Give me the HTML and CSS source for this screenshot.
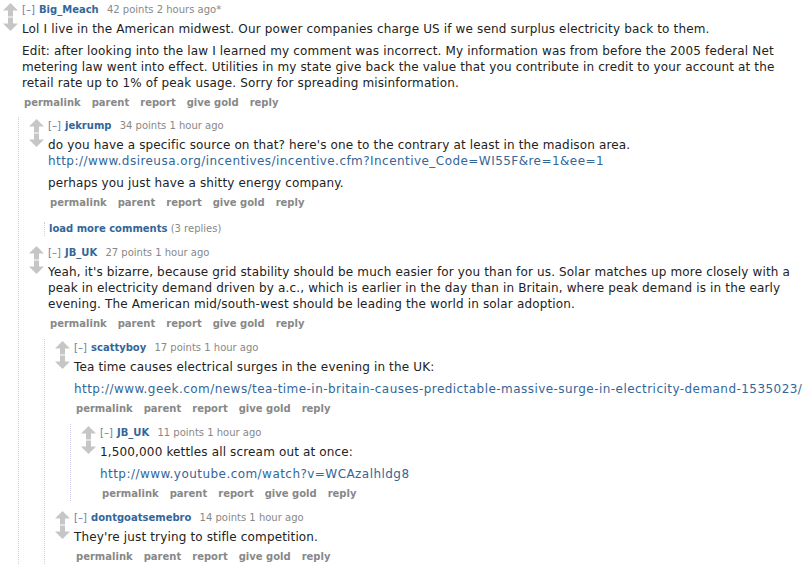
FILE: index.html
```html
<!DOCTYPE html>
<html>
<head>
<meta charset="utf-8">
<link rel="stylesheet" href="styles.css">
</head>
<body>
<div class="thread">
  <div class="comment top">
    <div class="row">
      <div class="midcol">
        <svg class="arrow" viewBox="0 0 15 14"><polygon points="7.5,0 15,7.5 10,7.5 10,13.5 5,13.5 5,7.5 0,7.5"/></svg>
        <svg class="arrow" viewBox="0 0 15 14"><polygon points="7.5,14 15,6.5 10,6.5 10,0.5 5,0.5 5,6.5 0,6.5"/></svg>
      </div>
      <div class="entry">
        <p class="tagline"><a class="expand">[–]</a> <a class="author">Big_Meach</a> <span class="score">42 points 2 hours ago*</span></p>
        <div class="md">
          <p>Lol I live in the American midwest. Our power companies charge US if we send surplus electricity back to them.</p>
          <p>Edit: after looking into the law I learned my comment was incorrect. My information was from before the 2005 federal Net<br>metering law went into effect. Utilities in my state give back the value that you contribute in credit to your account at the<br>retail rate up to 1% of peak usage. Sorry for spreading misinformation.</p>
        </div>
        <ul class="buttons"><li>permalink</li><li>parent</li><li>report</li><li>give gold</li><li>reply</li></ul>
      </div>
    </div>
    <div class="child">
      <div class="comment">
        <div class="row">
          <div class="midcol">
            <svg class="arrow" viewBox="0 0 15 14"><polygon points="7.5,0 15,7.5 10,7.5 10,13.5 5,13.5 5,7.5 0,7.5"/></svg>
            <svg class="arrow" viewBox="0 0 15 14"><polygon points="7.5,14 15,6.5 10,6.5 10,0.5 5,0.5 5,6.5 0,6.5"/></svg>
          </div>
          <div class="entry">
            <p class="tagline"><a class="expand">[–]</a> <a class="author">jekrump</a> <span class="score">34 points 1 hour ago</span></p>
            <div class="md">
              <p>do you have a specific source on that? here's one to the contrary at least in the madison area.<br><a class="link">http://www.dsireusa.org/incentives/incentive.cfm?Incentive_Code=WI55F&amp;re=1&amp;ee=1</a></p>
              <p>perhaps you just have a shitty energy company.</p>
            </div>
            <ul class="buttons"><li>permalink</li><li>parent</li><li>report</li><li>give gold</li><li>reply</li></ul>
          </div>
        </div>
        <div class="showreplies"><a class="more">load more comments</a> <span class="count">(3 replies)</span></div>
      </div>

      <div class="comment">
        <div class="row">
          <div class="midcol">
            <svg class="arrow" viewBox="0 0 15 14"><polygon points="7.5,0 15,7.5 10,7.5 10,13.5 5,13.5 5,7.5 0,7.5"/></svg>
            <svg class="arrow" viewBox="0 0 15 14"><polygon points="7.5,14 15,6.5 10,6.5 10,0.5 5,0.5 5,6.5 0,6.5"/></svg>
          </div>
          <div class="entry">
            <p class="tagline"><a class="expand">[–]</a> <a class="author">JB_UK</a> <span class="score">27 points 1 hour ago</span></p>
            <div class="md">
              <p>Yeah, it's bizarre, because grid stability should be much easier for you than for us. Solar matches up more closely with a<br>peak in electricity demand driven by a.c., which is earlier in the day than in Britain, where peak demand is in the early<br>evening. The American mid/south-west should be leading the world in solar adoption.</p>
            </div>
            <ul class="buttons"><li>permalink</li><li>parent</li><li>report</li><li>give gold</li><li>reply</li></ul>
          </div>
        </div>
        <div class="child">
          <div class="comment">
            <div class="row">
              <div class="midcol">
                <svg class="arrow" viewBox="0 0 15 14"><polygon points="7.5,0 15,7.5 10,7.5 10,13.5 5,13.5 5,7.5 0,7.5"/></svg>
                <svg class="arrow" viewBox="0 0 15 14"><polygon points="7.5,14 15,6.5 10,6.5 10,0.5 5,0.5 5,6.5 0,6.5"/></svg>
              </div>
              <div class="entry">
                <p class="tagline"><a class="expand">[–]</a> <a class="author">scattyboy</a> <span class="score">17 points 1 hour ago</span></p>
                <div class="md">
                  <p>Tea time causes electrical surges in the evening in the UK:</p>
                  <p><a class="link">http://www.geek.com/news/tea-time-in-britain-causes-predictable-massive-surge-in-electricity-demand-1535023/</a></p>
                </div>
                <ul class="buttons"><li>permalink</li><li>parent</li><li>report</li><li>give gold</li><li>reply</li></ul>
              </div>
            </div>
            <div class="child">
              <div class="comment">
                <div class="row">
                  <div class="midcol">
                    <svg class="arrow" viewBox="0 0 15 14"><polygon points="7.5,0 15,7.5 10,7.5 10,13.5 5,13.5 5,7.5 0,7.5"/></svg>
                    <svg class="arrow" viewBox="0 0 15 14"><polygon points="7.5,14 15,6.5 10,6.5 10,0.5 5,0.5 5,6.5 0,6.5"/></svg>
                  </div>
                  <div class="entry">
                    <p class="tagline"><a class="expand">[–]</a> <a class="author">JB_UK</a> <span class="score">11 points 1 hour ago</span></p>
                    <div class="md">
                      <p>1,500,000 kettles all scream out at once:</p>
                      <p><a class="link">http://www.youtube.com/watch?v=WCAzalhldg8</a></p>
                    </div>
                    <ul class="buttons"><li>permalink</li><li>parent</li><li>report</li><li>give gold</li><li>reply</li></ul>
                  </div>
                </div>
              </div>
            </div>
          </div>

          <div class="comment">
            <div class="row">
              <div class="midcol">
                <svg class="arrow" viewBox="0 0 15 14"><polygon points="7.5,0 15,7.5 10,7.5 10,13.5 5,13.5 5,7.5 0,7.5"/></svg>
                <svg class="arrow" viewBox="0 0 15 14"><polygon points="7.5,14 15,6.5 10,6.5 10,0.5 5,0.5 5,6.5 0,6.5"/></svg>
              </div>
              <div class="entry">
                <p class="tagline"><a class="expand">[–]</a> <a class="author">dontgoatsemebro</a> <span class="score">14 points 1 hour ago</span></p>
                <div class="md">
                  <p>They're just trying to stifle competition.</p>
                </div>
                <ul class="buttons"><li>permalink</li><li>parent</li><li>report</li><li>give gold</li><li>reply</li></ul>
              </div>
            </div>
          </div>
        </div>
      </div>
    </div>
  </div>
</div>
</body>
</html>
```

FILE: styles.css
```css
html, body {
  margin: 0;
  padding: 0;
  background: #ffffff;
  overflow: hidden;
}
body {
  font-family: "DejaVu Sans", Verdana, sans-serif;
  color: #222222;
}
.thread {
  padding-top: 1px;
}
.comment {
  margin-left: 10px;
  margin-top: 8px;
}
.comment.top {
  margin-left: 3px;
  margin-top: 0;
}
.comment.top > .child {
  margin-top: 7px;
}
.row {
  display: flex;
  align-items: flex-start;
}
.midcol {
  width: 15px;
  flex: none;
  margin-right: 4px;
  padding-top: 2px;
  display: flex;
  flex-direction: column;
}
.arrow {
  display: block;
  width: 15px;
  height: 14px;
  fill: #c6c6c6;
}
.entry {
  flex: 1;
  min-width: 0;
}
.tagline {
  margin: 2px 0 0;
  font-size: 10px;
  line-height: 14px;
  white-space: nowrap;
  color: #888888;
}
.expand {
  color: #6b77a8;
}
.author {
  color: #336699;
  font-weight: bold;
  margin-left: 1px;
  margin-right: 5px;
}
.md {
  margin-top: 4px;
  font-size: 12px;
  line-height: 16px;
  letter-spacing: 0.15px;
  white-space: nowrap;
}
.md p {
  margin: 0;
}
.md p + p {
  margin-top: 6px;
}
.link {
  color: #336699;
  letter-spacing: 0.45px;
}
.buttons {
  list-style: none;
  margin: 5px 0 0;
  padding: 0 0 0 2px;
  display: flex;
  gap: 11px;
  font-size: 10px;
  line-height: 14px;
  font-weight: bold;
  color: #888888;
}
.child {
  margin-left: 15px;
  margin-top: 8px;
  border-left: 1px dotted #ccccee;
}
.child > .comment:first-child {
  margin-top: 0;
}
.showreplies {
  margin-left: 15px;
  margin-top: 12px;
  padding-left: 4px;
  border-left: 1px dotted #ccccee;
  font-size: 10px;
  line-height: 14px;
  color: #888888;
}
.more {
  color: #336699;
  font-weight: bold;
}
```
